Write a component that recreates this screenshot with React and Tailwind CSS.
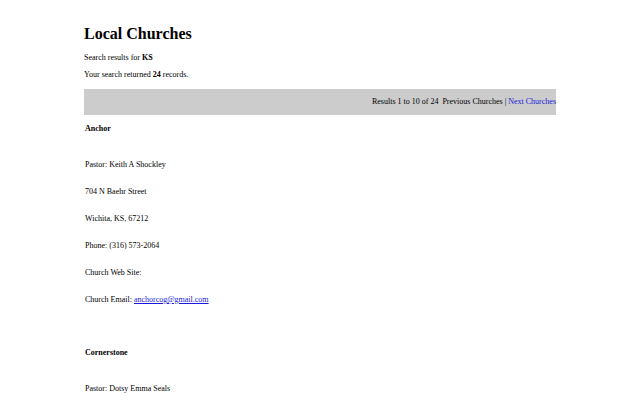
import React from 'react';

const churches = [
    {
        name: 'Anchor',
        pastor: 'Keith A Shockley',
        street: '704 N Baehr Street',
        city: 'Wichita, KS, 67212',
        phone: '(316) 573-2064',
        web: '',
        email: 'anchorcog@gmail.com',
    },
    {
        name: 'Cornerstone',
        pastor: 'Dotsy Emma Seals',
        street: '1020 E 8th Street',
        city: 'Hutchinson, KS, 67501',
        phone: '(620) 662-3334',
        web: '',
        email: '',
    },
];

const Line = ({ children }) => <div className="leading-[27px] h-[27px]">{children}</div>;

export default function App() {
    return (
        <div className="min-h-screen bg-white text-black text-[8px]" style={{ fontFamily: '"Liberation Serif", "Times New Roman", serif' }}>
            <div className="w-[472px] mx-auto">
                <h1 className="pt-[24px] text-[16px] font-bold leading-[20px]">Local Churches</h1>
                <div className="mt-[8px] leading-[12px]">Search results for <b>KS</b></div>
                <div className="mt-[5px] leading-[12px]">Your search returned <b>24</b> records.</div>
                <div className="mt-[8px] h-[26px] bg-[#cccccc] flex items-center justify-end">
                    <span>Results 1 to 10 of 24&nbsp; Previous Churches | <a href="#" className="text-[#1a1adb]">Next Churches</a></span>
                </div>
                <div className="pl-[1px]">
                    {churches.map((c) => (
                        <div key={c.name} className="mb-[26px]">
                            <div className="h-[28px] leading-[28px] font-bold">{c.name}</div>
                            <div className="mt-[8px]">
                                <Line>Pastor: {c.pastor}</Line>
                                <Line>{c.street}</Line>
                                <Line>{c.city}</Line>
                                <Line>Phone: {c.phone}</Line>
                                <Line>Church Web Site: {c.web}</Line>
                                <Line>Church Email: {c.email && <a href="#" className="text-[#1a1adb] underline">{c.email}</a>}</Line>
                            </div>
                        </div>
                    ))}
                </div>
            </div>
        </div>
    );
}
